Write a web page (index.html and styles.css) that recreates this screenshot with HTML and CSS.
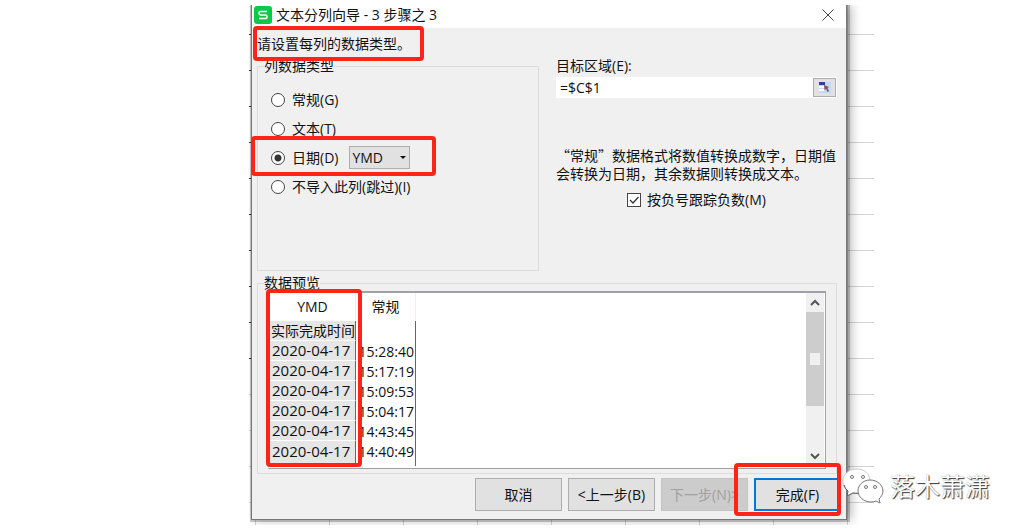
FILE: index.html
```html
<!DOCTYPE html>
<html lang="zh">
<head>
    <meta charset="UTF-8">
    <meta name="viewport" content="width=device-width, initial-scale=1.0">
    <title>文本分列向导</title>
    <link rel="stylesheet" href="styles.css">
</head>
<body>
    <div class="sheet">
        <form class="dialog">
            <div class="title-bar">
                <svg class="app-icon" width="18" height="18" viewBox="0 0 18 18">
                    <rect width="18" height="18" rx="3" fill="#0fc84b"/>
                    <path d="M13 5.5H6.5Q5 5.5 5 7T6.5 9H11.500Q13 9 13 10.800T11.500 12.500H5" fill="none" stroke="#fff" stroke-width="1.600"/>
                </svg>
                <span class="title">文本分列向导 - 3 步骤之 3</span>
                <button type="button" class="close" aria-label="关闭">
                    <svg width="12" height="12" viewBox="0 0 12 12"><path d="M0.500 0.500L11.500 11.500M11.500 0.500L0.500 11.500" stroke="#444" fill="none"/></svg>
                </button>
            </div>

            <div class="dialog-body">
                <div class="hint">请设置每列的数据类型。<span class="mark mark-hint"></span></div>

                <div class="settings">
                    <fieldset class="group type-group">
                        <legend>列数据类型</legend>
                        <div class="option">
                            <input type="radio" name="type" id="type_general">
                            <label for="type_general">常规(G)</label>
                        </div>
                        <div class="option">
                            <input type="radio" name="type" id="type_text">
                            <label for="type_text">文本(T)</label>
                        </div>
                        <div class="option">
                            <input type="radio" name="type" id="type_date" checked>
                            <label for="type_date">日期(D)</label>
                            <span class="select-box">
                                <select aria-label="日期格式">
                                    <option>YMD</option>
                                    <option>MDY</option>
                                    <option>DMY</option>
                                </select>
                            </span>
                            <span class="mark mark-date"></span>
                        </div>
                        <div class="option">
                            <input type="radio" name="type" id="type_skip">
                            <label for="type_skip">不导入此列(跳过)(I)</label>
                        </div>
                    </fieldset>

                    <div class="target">
                        <label for="target_range">目标区域(E):</label>
                        <div class="range">
                            <input type="text" id="target_range" value="=$C$1">
                            <button type="button" aria-label="选择区域">
                                <svg width="12" height="11" viewBox="0 0 12 11">
                                    <rect width="12" height="11" fill="#c3d8fb"/>
                                    <path d="M0 0H6V3H0Z" fill="#3c3c9c"/>
                                    <path d="M0 4H5V6H0ZM0 7H5V9H0Z" fill="#fff"/>
                                    <path d="M5 3L10 5L8.500 6L10 9L8.500 10L7 7L5.500 8Z" fill="#87545a"/>
                                </svg>
                            </button>
                        </div>
                        <p class="note">“常规”数据格式将数值转换成数字，日期值<br>会转换为日期，其余数据则转换成文本。</p>
                        <div class="negative">
                            <span class="check-box">
                                <input type="checkbox" id="negative" checked>
                                <svg width="14" height="14" viewBox="0 0 14 14"><path d="M3 7L6 10L11.500 4" fill="none" stroke="#333" stroke-width="1.300"/></svg>
                            </span>
                            <label for="negative">按负号跟踪负数(M)</label>
                        </div>
                    </div>
                </div>

                <fieldset class="group preview-group">
                    <legend>数据预览</legend>
                    <div class="preview">
                        <table>
                            <thead>
                                <tr><th>YMD</th><th>常规</th></tr>
                            </thead>
                            <tbody>
                                <tr><td class="name">实际完成时间</td><td></td></tr>
                                <tr><td>2020-04-17</td><td>15:28:40</td></tr>
                                <tr><td>2020-04-17</td><td>15:17:19</td></tr>
                                <tr><td>2020-04-17</td><td>15:09:53</td></tr>
                                <tr><td>2020-04-17</td><td>15:04:17</td></tr>
                                <tr><td>2020-04-17</td><td>14:43:45</td></tr>
                                <tr><td>2020-04-17</td><td>14:40:49</td></tr>
                            </tbody>
                        </table>
                        <div class="scrollbar">
                            <button type="button" aria-label="向上滚动">
                                <svg width="10" height="7" viewBox="0 0 10 7"><path d="M1 6L5 2L9 6" fill="none" stroke="#555" stroke-width="2"/></svg>
                            </button>
                            <div class="thumb"></div>
                            <button type="button" aria-label="向下滚动">
                                <svg width="10" height="7" viewBox="0 0 10 7"><path d="M1 1L5 5L9 1" fill="none" stroke="#555" stroke-width="2"/></svg>
                            </button>
                        </div>
                        <span class="mark mark-column"></span>
                    </div>
                </fieldset>

                <div class="actions">
                    <button type="button">取消</button>
                    <button type="button">&lt;上一步(B)</button>
                    <button type="button" disabled>下一步(N)&gt;</button>
                    <div class="finish">
                        <button type="submit">完成(F)</button>
                        <span class="mark mark-finish"></span>
                    </div>
                </div>
            </div>
        </form>
    </div>

    <div class="watermark">
        <svg width="42" height="36" viewBox="0 0 42 36">
            <g fill="#fff" stroke="#777" stroke-width="1">
                <path d="M15 1C7 1 1 6 1 13C1 18 3 21 6 23L5 28L11 25Q15 26 19 25C25 23 29 18 28 12C27 5 22 1 15 1Z" stroke="#ccc"/>
                <path d="M2 17Q3 21 6 23L5 28L11 25L17 25.500" fill="none" stroke="#555"/>
                <path d="M28 12C21 12 16 17 16 23C16 29 22 34 29 34Q32 34 34 33L38 35L37 31C39 29 41 26 41 23C41 17 35 12 28 12Z"/>
                <circle cx="10" cy="9" r="1.500"/>
                <circle cx="21" cy="9" r="1.500"/>
                <circle cx="24" cy="19" r="1.500"/>
                <circle cx="33" cy="19" r="1.500"/>
            </g>
        </svg>
        <span>落木萧潇</span>
    </div>
</body>
</html>
```
FILE: styles.css
```css
* {
    box-sizing: border-box;
}
body {
    position: relative;
    margin: 0;
    padding: 5px 150px 8px 249px;
    background-color: #fff;
    color: #111;
    font-family: "Open Sans", "Noto Sans CJK SC", sans-serif;
    font-size: 14px;
    line-height: 20px;
}
button,
input,
select {
    margin: 0;
    padding: 0;
    font: inherit;
    color: inherit;
}
svg {
    display: block;
}

/* spreadsheet grid behind the dialog */
.sheet {
    overflow: hidden;
    padding: 0 27px 5px 2px;
    background-image:
        repeating-linear-gradient(to bottom, transparent 0 29px, #333 29px 30px, transparent 30px 36px),
        repeating-linear-gradient(to bottom, transparent 0 29px, #d4d4d4 29px 30px, transparent 30px 36px),
        repeating-linear-gradient(to right, transparent 0 6px, #d4d4d4 6px 7px, transparent 7px 74px);
    background-size: 2px 370px, auto, auto;
    background-repeat: no-repeat;
}
.dialog {
    border: 1px solid #777;
    border-top: none;
    background-color: #f0f0f0;
    box-shadow: 1px 0 0 2px rgba(0,0,0,0.2), 4px 0 10px 0 rgba(0,0,0,0.3);
}
.title-bar {
    display: flex;
    align-items: center;
    height: 23px;
    padding: 0 12px 4px 2px;
    background-color: #fff;
}
.title {
    flex: 1;
    margin-left: 4px;
}
.close {
    border: none;
    background: none;
}
.dialog-body {
    padding: 6px 5px 8px;
}

/* red annotation frames */
.mark {
    position: absolute;
    border: 4px solid #ff2318;
    border-radius: 4px;
    pointer-events: none;
}
.hint {
    position: relative;
    margin-bottom: 4px;
}
.mark-hint {
    top: -8px;
    left: -4px;
    width: 171px;
    height: 35px;
}
.settings {
    display: grid;
    grid-template-columns: 282fr 281fr;
    gap: 17px;
    margin-right: 4px;
}
.group {
    min-width: 0;
    margin: 0;
    border: 1px solid #dcdcdc;
}
.group legend {
    padding: 0;
    line-height: 16px;
}
.type-group {
    min-height: 213px;
    padding: 11px 13px;
}
.type-group legend {
    margin-left: -7px;
}
.preview-group {
    margin: 4px 4px 4px 0;
    padding: 0 10px 4px;
}
.preview-group legend {
    margin-left: -4px;
}
.option {
    position: relative;
    display: flex;
    align-items: center;
    height: 29px;
}
.option label {
    margin-left: 7px;
}
input[type="radio"],
input[type="checkbox"] {
    appearance: none;
    display: block;
    width: 14px;
    height: 14px;
    border: 1px solid #444;
    background-color: #fff;
}
input[type="radio"] {
    border-radius: 50%;
}
input[type="radio"]:checked {
    background-image: radial-gradient(circle, #333 3px, transparent 4px);
}
.select-box {
    position: relative;
    margin-left: 11px;
}
.select-box::after {
    content: "";
    position: absolute;
    top: 10px;
    right: 4px;
    border: 3px solid transparent;
    border-top-color: #111;
    border-bottom: none;
}
.select-box select {
    appearance: none;
    display: block;
    width: 61px;
    height: 23px;
    padding-left: 2px;
    border: 1px solid #adadad;
    border-radius: 0;
    background-color: #e1e1e1;
}
.mark-date {
    top: -7px;
    left: -20px;
    width: 185px;
    height: 40px;
}

.target > label {
    display: block;
    height: 19px;
    line-height: 16px;
}
.range {
    display: flex;
    align-items: center;
    height: 21px;
    padding-right: 1px;
    background-color: #fff;
}
.range input {
    flex: 1;
    min-width: 0;
    padding-left: 4px;
    border: none;
    background: none;
    outline: none;
}
.range button {
    display: flex;
    align-items: center;
    justify-content: center;
    width: 23px;
    height: 19px;
    border: 1px solid #adadad;
    background-color: #e1e1e1;
}
.note {
    margin: 48px -8px 0 0;
    font-family: "Noto Sans CJK SC", sans-serif;
    line-height: 18px;
}
.negative {
    display: flex;
    align-items: center;
    justify-content: center;
    margin-top: 8px;
}
.negative label {
    margin-left: 6px;
}
.check-box {
    position: relative;
}
.check-box svg {
    position: absolute;
    top: 0;
    left: 0;
    pointer-events: none;
}
input:not(:checked) + svg {
    display: none;
}

.preview {
    position: relative;
    display: flex;
    justify-content: space-between;
    height: 178px;
    padding: 0 1px 2px 1px;
    border: 1px solid #a0a0a8;
    border-top-width: 2px;
    border-left-color: #ddd;
    background-color: #fff;
}
table {
    align-self: flex-start;
    border-collapse: separate;
    border-spacing: 0;
    table-layout: fixed;
    width: 146px;
}
th {
    width: 60px;
    height: 28px;
    padding: 0;
    border-right: 1px solid #eee;
    font-weight: normal;
}
th:first-child {
    width: 86px;
}
td {
    height: 20px;
    padding: 0 1px 0 0;
    border-right: 1px solid #666;
    line-height: 19px;
    text-align: right;
    white-space: nowrap;
}
td:first-child {
    padding: 0 0 0 2px;
    border-bottom: 1px solid #fff;
    background-color: #e6e6e6;
    font-size: 15px;
    text-align: left;
}
td.name:first-child {
    padding: 0 0 0 1px;
    font-size: 14px;
}
tbody tr:last-child td {
    height: 25px;
    padding-bottom: 4px;
}
.scrollbar {
    display: flex;
    flex-direction: column;
    width: 18px;
    background-color: #f0f0f0;
}
.scrollbar button {
    display: flex;
    align-items: center;
    justify-content: center;
    height: 19px;
    border: none;
    background: none;
}
.scrollbar button:last-child {
    margin-top: auto;
}
.thumb {
    display: flex;
    align-items: center;
    justify-content: center;
    height: 94px;
    background-color: #cdcdcd;
}
.thumb::after {
    content: "";
    width: 10px;
    height: 12px;
    background-color: #f0f0f0;
}
.mark-column {
    top: -4px;
    left: -3px;
    width: 96px;
    height: 178px;
}

.actions {
    display: flex;
    justify-content: flex-end;
    gap: 6px;
}
.actions button {
    width: 87px;
    height: 33px;
    border: 1px solid #adadad;
    background-color: #e1e1e1;
}
.actions button:disabled {
    border-color: #c4c4c4;
    background-color: #ccc;
    color: #a0a0a0;
}
.finish {
    position: relative;
}
.actions .finish button {
    display: block;
    border: 2px solid #0078d7;
}
.mark-finish {
    top: -15px;
    right: 0;
    width: 107px;
    height: 53px;
}

.watermark {
    position: absolute;
    right: 34px;
    bottom: 29px;
    display: flex;
    align-items: center;
    gap: 6px;
    color: #fff;
    font-size: 25px;
    line-height: 36px;
    text-shadow: 1px 1px 1px #333, 0 0 1px #999;
}
```
